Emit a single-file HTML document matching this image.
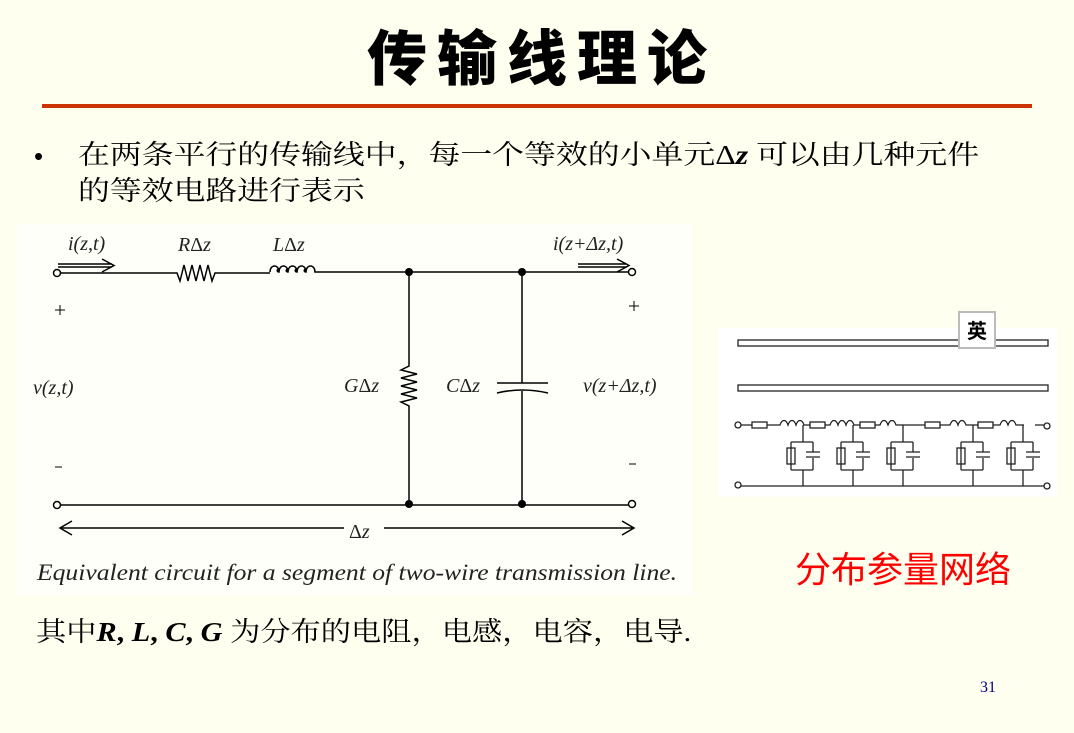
<!DOCTYPE html>
<html><head><meta charset="utf-8"><style>
body{margin:0;width:1074px;height:733px;background:#FFFFF0;position:relative;overflow:hidden;font-family:"Liberation Serif","Noto Serif CJK SC",serif;}
.a{position:absolute;white-space:nowrap;}
</style></head><body>
<div class="a" style="left:0;width:1074px;text-align:center;top:20px;font-size:60px;font-weight:900;font-family:'Noto Sans CJK SC',sans-serif;line-height:70px;letter-spacing:10px;padding-left:10px;box-sizing:border-box;">传输线理论</div>
<div class="a" style="left:42px;top:104px;width:990px;height:4px;background:#CC3300"></div>
<div class="a" style="left:34px;top:138px;font-size:26px;line-height:36px;font-family:'Liberation Sans','Noto Sans CJK SC',sans-serif;">•</div>
<div class="a" style="left:78px;top:137px;font-size:27px;line-height:36px;transform:scaleX(1.18);transform-origin:0 0;font-family:'Liberation Serif','Noto Serif CJK SC',serif;">在两条平行的传输线中，每一个等效的小单元<span>Δ<i><b>z</b></i></span> 可以由几种元件<br>的等效电路进行表示</div>
<svg class="a" style="left:17px;top:224px" width="675" height="372" viewBox="17 224 675 372">
<rect x="17" y="224" width="675" height="372" fill="#FFFFFA"/>
<g stroke="#000" stroke-width="1.5" fill="none">
<circle cx="57" cy="273" r="3.5"/><circle cx="632" cy="272" r="3.5"/>
<circle cx="57" cy="505" r="3.5"/><circle cx="632" cy="504" r="3.5"/>
<path d="M60.5 273H177l3 8 4-16 4 16 4-16 4 16 4-16 4 16 4-16 4 16 3-8H270"/>
<path d="M270 272c0-8 9-8 9 0c0-6 -4 0 0 0c0-8 9-8 9 0c0-6 -4 0 0 0c0-8 9-8 9 0c0-6-4 0 0 0c0-8 9-8 9 0c0-6-4 0 0 0c0-8 9-8 9 0H628.5"/>
<path d="M60.5 505H628.5"/>
<path d="M409 272V366l-8 4 16 4-16 4 16 4-16 4 16 4-16 4 16 4-16 4 8 4V504"/>
<path d="M522 272V383M522 391V504"/>
<path d="M497 383H548M497 393q25-6 51 0"/>
<path d="M58 264H112M58 267H112M102 259l12 6.5-12 6.5"/>
<path d="M578 264H627M578 267H627M617 259l12 6.5-12 6.5"/>
<path d="M60 528H344M384 528H634M72 521l-12 7 12 7M622 521l12 7-12 7"/>
<path d="M55 310H65M60 305V315M629 306H639M634 301V311M55 467H62M629 464H636" stroke-width="1"/>
</g>
<g fill="#000"><circle cx="409" cy="272" r="4"/><circle cx="522" cy="272" r="4"/><circle cx="409" cy="504" r="4"/><circle cx="522" cy="504" r="4"/></g>
<g font-family="Liberation Serif" font-size="20" fill="#222">
<text x="68" y="250" font-style="italic">i(z,t)</text>
<text x="178" y="251"><tspan font-style="italic">R</tspan>Δ<tspan font-style="italic">z</tspan></text>
<text x="273" y="251"><tspan font-style="italic">L</tspan>Δ<tspan font-style="italic">z</tspan></text>
<text x="553" y="250" font-style="italic">i(z+Δz,t)</text>
<text x="33" y="394" font-style="italic">v(z,t)</text>
<text x="344" y="392"><tspan font-style="italic">G</tspan>Δ<tspan font-style="italic">z</tspan></text>
<text x="446" y="392"><tspan font-style="italic">C</tspan>Δ<tspan font-style="italic">z</tspan></text>
<text x="583" y="392" font-style="italic">v(z+Δz,t)</text>
<text x="349" y="538">Δ<tspan font-style="italic">z</tspan></text>
<text x="37" y="580" font-style="italic" font-size="23" textLength="640" lengthAdjust="spacingAndGlyphs">Equivalent circuit for a segment of two-wire transmission line.</text>
</g>
</svg>
<svg class="a" style="left:718px;top:328px" width="339" height="169" viewBox="718 328 339 169">
<rect x="718" y="328" width="339" height="169" fill="#fff"/>
<g stroke="#222" stroke-width="1.3" fill="none">
<rect x="738" y="340" width="310" height="6"/>
<rect x="738" y="385" width="310" height="6"/>
<circle cx="738" cy="425" r="3"/><circle cx="1047" cy="426" r="3"/><circle cx="738" cy="485" r="3"/><circle cx="1047" cy="486" r="3"/>
<path d="M741 425H752M767 425H780c2-6 6-6 8 0c2-6 6-6 8 0c2-6 6-6 8 0H810M825 425H830c2-6 6-6 8 0c2-6 6-6 8 0c2-6 6-6 8 0H860M875 425H880c2-6 6-6 8 0c2-6 6-6 8 0H905M905 425H925M940 425H950c2-6 6-6 8 0c2-6 6-6 8 0H978M993 425H1000c2-6 6-6 8 0c2-6 6-6 8 0H1024M1035 425H1044"/>
<rect x="752" y="422" width="15" height="6"/><rect x="810" y="422" width="15" height="6"/><rect x="860" y="422" width="15" height="6"/><rect x="925" y="422" width="15" height="6"/><rect x="978" y="422" width="15" height="6"/>
<path d="M741 486H1044"/>
<g id="c"><path d="M803 425V442M791 442H813M791 442V470M813 442V452M813 458V470M791 470H813M803 470V486M806 452H820M806 457H820"/><rect x="787" y="448" width="8" height="16"/></g>
<use href="#c" x="50"/><use href="#c" x="100"/><use href="#c" x="170"/><use href="#c" x="220"/>
</g>
</svg>
<div class="a" style="left:958px;top:311px;width:38px;height:38px;background:#fff;border:2px solid #bbb;box-sizing:border-box;text-align:center;line-height:34px;font-size:20px;font-weight:bold;font-family:'Noto Sans CJK SC',sans-serif;">英</div>
<div class="a" style="left:795px;top:544px;font-size:36px;color:#FF0000;font-family:'Noto Sans CJK SC',sans-serif;line-height:46px;">分布参量网络</div>
<div class="a" style="left:36px;top:614px;font-size:27px;line-height:36px;transform:scaleX(1.12);transform-origin:0 0;">其中<b><i>R</i>, <i>L</i>, <i>C</i>, <i>G</i></b> 为分布的电阻，电感，电容，电导.</div>
<div class="a" style="left:980px;top:679px;font-size:16px;color:#000080;">31</div>
</body></html>
